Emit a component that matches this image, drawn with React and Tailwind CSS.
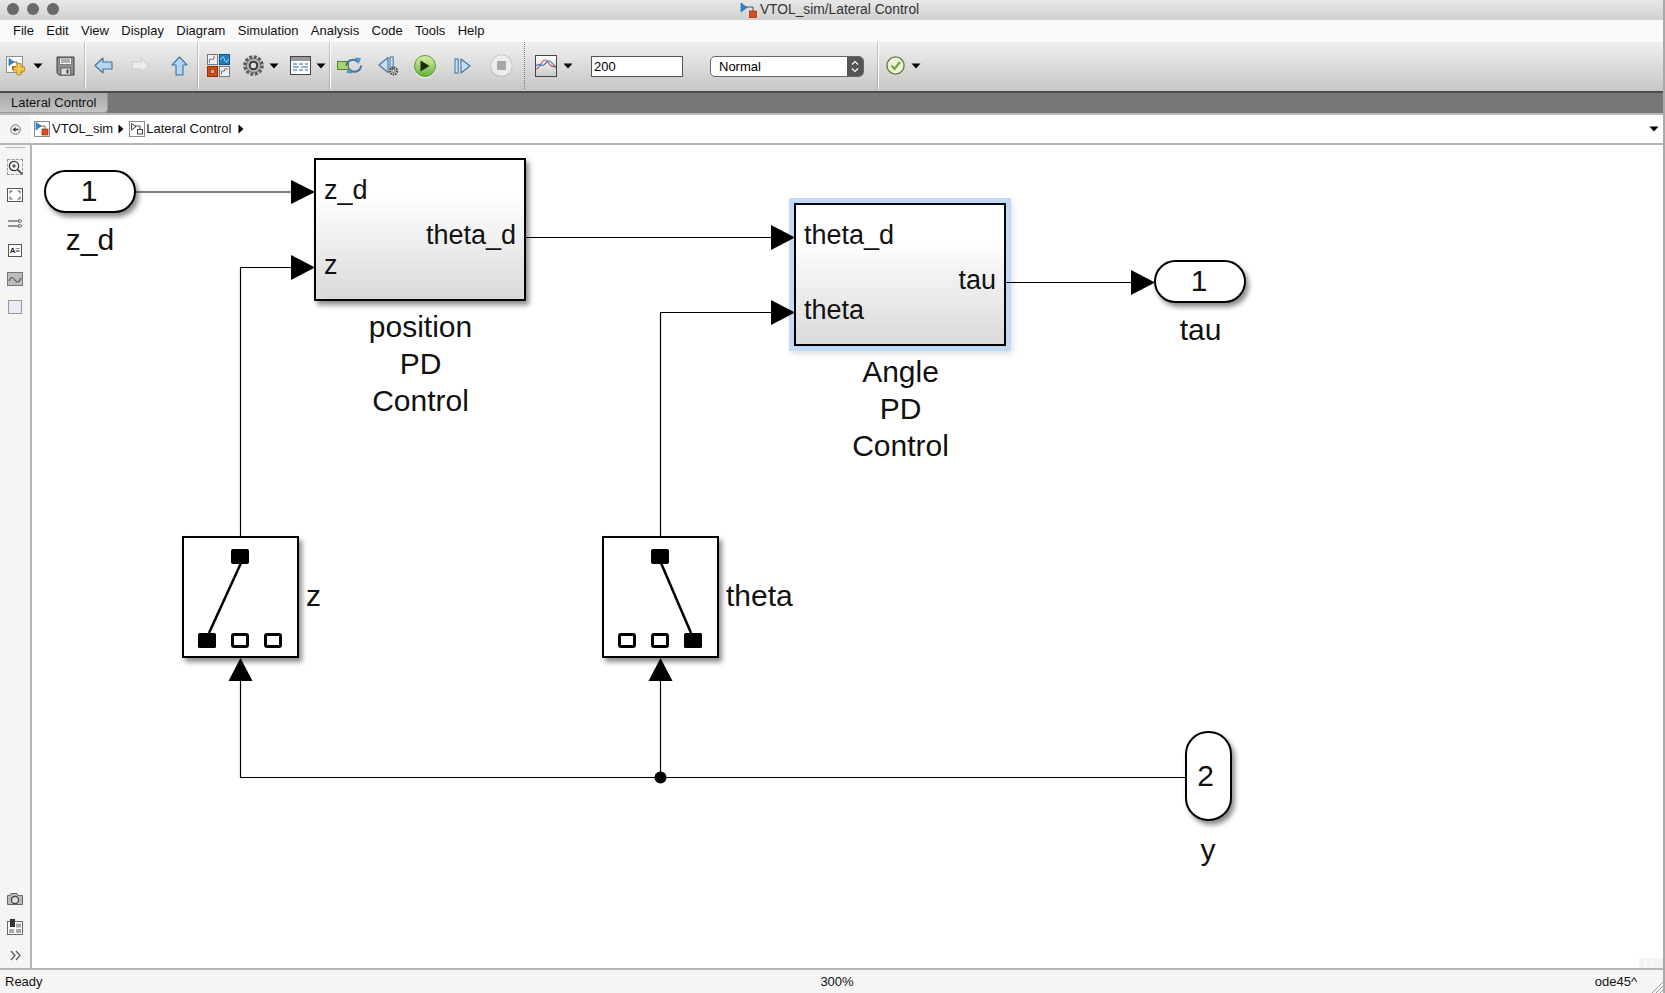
import React from "react";

const MENU = ["File", "Edit", "View", "Display", "Diagram", "Simulation", "Analysis", "Code", "Tools", "Help"];

function Caret({ className = "" }) {
  return (
    <svg width="10" height="6" viewBox="0 0 10 6" className={className}>
      <path d="M0.5 0.5H9.5L5 5.5Z" fill="#000" />
    </svg>
  );
}

function CaretRight() {
  return (
    <svg width="6" height="10" viewBox="0 0 6 10" className="shrink-0">
      <path d="M0.5 0.5V9.5L5.5 5Z" fill="#000" />
    </svg>
  );
}

function ModelIcon({ size = 16 }) {
  return (
    <svg width={size} height={size} viewBox="0 0 16 16">
      <rect x="0.5" y="0.5" width="15" height="15" fill="#fff" stroke="#8a8a8a" />
      <path d="M2 1.5V9L7 5Z" fill="#2f86c8" stroke="#1c5f95" strokeWidth="0.6" />
      <path d="M5 5H11V8" fill="none" stroke="#444" strokeWidth="0.8" />
      <rect x="8" y="8" width="6" height="6" fill="#d9501e" stroke="#8c2f0e" strokeWidth="0.7" />
    </svg>
  );
}

function SubsystemIcon() {
  return (
    <svg width="16" height="16" viewBox="0 0 16 16">
      <rect x="0.5" y="0.5" width="15" height="15" fill="#fff" stroke="#8a8a8a" />
      <path d="M2.5 2.5V9L7 5.7Z" fill="#fff" stroke="#333" strokeWidth="0.9" />
      <path d="M6 5H11V8" fill="none" stroke="#333" strokeWidth="0.9" />
      <rect x="8.5" y="8.5" width="5" height="4.5" fill="#fff" stroke="#333" strokeWidth="0.9" />
    </svg>
  );
}

function NewModelIcon() {
  return (
    <svg width="20" height="20" viewBox="0 0 20 20">
      <rect x="0.5" y="0.5" width="16" height="16" fill="#fafafa" stroke="#8f8f8f" />
      <path d="M3 2.5V9.5L8 6Z" fill="#2f86c8" stroke="#1c5f95" strokeWidth="0.6" />
      <path d="M7 6H11V9" fill="none" stroke="#444" strokeWidth="0.8" />
      <rect x="6" y="10" width="4" height="4" fill="#d9501e" />
      <path d="M11 7.5H15V11H18.5V15H15V19H11V15H7.5V11H11Z" fill="#f3cb4a" stroke="#a98418" strokeWidth="0.8" />
    </svg>
  );
}

function SaveIcon() {
  return (
    <svg width="19" height="20" viewBox="0 0 19 20">
      <path d="M1 1H18V19H3L1 17Z" fill="#8e8e8e" stroke="#3f3f3f" />
      <rect x="3.5" y="2" width="12" height="6.5" fill="#f4f4f4" stroke="#555" strokeWidth="0.6" />
      <path d="M5 4H14M5 6H14" stroke="#444" strokeWidth="0.8" />
      <rect x="5" y="12" width="9.5" height="7" fill="#dcdcdc" stroke="#444" strokeWidth="0.7" />
      <rect x="10.5" y="13.5" width="2" height="4" fill="#444" />
    </svg>
  );
}

function ArrowIcon({ dir, fill, stroke }) {
  const d = {
    left: "M1 8.5L9 1V5H18V12H9V16Z",
    right: "M18 8.5L10 1V5H1V12H10V16Z",
  }[dir];
  return (
    <svg width="19" height="17" viewBox="0 0 19 17">
      <path d={d} fill={fill} stroke={stroke} strokeWidth="1.1" strokeLinejoin="round" />
    </svg>
  );
}

function UpIcon() {
  return (
    <svg width="17" height="20" viewBox="0 0 17 20">
      <path d="M8.5 1L16 9H12V19H5V9H1Z" fill="#b5d6f2" stroke="#42719d" strokeWidth="1.1" strokeLinejoin="round" />
    </svg>
  );
}

function LibraryIcon() {
  return (
    <svg width="23" height="23" viewBox="0 0 23 23">
      <rect x="0.5" y="0.5" width="10" height="10" fill="#efefef" stroke="#777" />
      <path d="M2.5 9V5.5L7 5V1.5" fill="none" stroke="#777" />
      <rect x="12.5" y="0.5" width="10" height="10" fill="#1d7fc0" stroke="#14567f" />
      <path d="M13.5 6C15 2 16.5 2 17.5 5.5S20 9 21.5 5" fill="none" stroke="#bfe2f7" />
      <rect x="0.5" y="12.5" width="10" height="10" fill="#d04a17" stroke="#8b2f0c" />
      <rect x="3.5" y="15.5" width="4" height="4" fill="#f2a685" stroke="#7a2a0a" strokeWidth="0.6" />
      <rect x="12.5" y="12.5" width="10" height="10" fill="#efefef" stroke="#777" />
      <path d="M14.5 20.5V17H17.5V15H21" fill="none" stroke="#777" />
    </svg>
  );
}

function GearIcon() {
  return (
    <svg width="21" height="21" viewBox="0 0 21 21">
      <circle cx="10.5" cy="10.5" r="8.6" fill="none" stroke="#5c5c5c" strokeWidth="3.4" strokeDasharray="3 1.5" />
      <circle cx="10.5" cy="10.5" r="7" fill="#bdbdbd" stroke="#666" strokeWidth="1" />
      <circle cx="10.5" cy="10.5" r="3.8" fill="#ddd" stroke="#3c3c3c" strokeWidth="2" />
    </svg>
  );
}

function ConfigIcon() {
  return (
    <svg width="21" height="19" viewBox="0 0 21 19">
      <rect x="0.5" y="0.5" width="20" height="18" fill="#fff" stroke="#444" />
      <rect x="1" y="1" width="19" height="4" fill="#9a9a9a" />
      <path d="M3 8H7M9 8H13M15 8H18M3 11H9M11 11H18M3 14H7M9 14H13M15 14H18" stroke="#2469a8" strokeWidth="1.2" />
    </svg>
  );
}

function LoopIcon() {
  return (
    <svg width="25" height="17" viewBox="0 0 25 17">
      <rect x="0.5" y="4.5" width="11" height="8" fill="#a7d26b" stroke="#5d7f2c" />
      <path d="M9.5 9A6.5 6 0 0 1 21 5" fill="none" stroke="#3f78a8" strokeWidth="2" />
      <path d="M24 8.5A6.5 6 0 0 1 12.5 12.5" fill="none" stroke="#3f78a8" strokeWidth="2" />
      <path d="M18.5 1L23.5 1.5L21.5 6.5Z M15 16L10 15.5L12 10.5Z" fill="#5d9bcf" stroke="#3f78a8" strokeWidth="0.6" />
    </svg>
  );
}

function StepBackIcon() {
  return (
    <svg width="22" height="20" viewBox="0 0 22 20">
      <path d="M1 9L10 1.5V16.5Z" fill="#c7ddf2" stroke="#47739c" strokeWidth="1.1" strokeLinejoin="round" />
      <rect x="12" y="1" width="3.2" height="12" fill="#c7ddf2" stroke="#47739c" strokeWidth="1" />
      <circle cx="15.5" cy="15" r="3.6" fill="none" stroke="#4a4a4a" strokeWidth="2" strokeDasharray="1.6 0.8" />
      <circle cx="15.5" cy="15" r="1.6" fill="#e8e8e8" stroke="#4a4a4a" strokeWidth="0.8" />
    </svg>
  );
}

function StepForwardIcon() {
  return (
    <svg width="17" height="16" viewBox="0 0 17 16">
      <rect x="1" y="1" width="3.2" height="14" fill="#c7ddf2" stroke="#47739c" strokeWidth="1" />
      <path d="M7 1L16 8L7 15Z" fill="#c7ddf2" stroke="#47739c" strokeWidth="1.1" strokeLinejoin="round" />
    </svg>
  );
}

function PlayIcon() {
  return (
    <div className="flex h-[22px] w-[22px] items-center justify-center rounded-full border border-[#5f9a35] bg-linear-to-b from-[#d8efa9] to-[#63b53a] shadow-[0_1px_1px_rgba(255,255,255,0.8)]">
      <svg width="10" height="12" viewBox="0 0 10 12">
        <path d="M0.5 0.5L9.5 6L0.5 11.5Z" fill="#1d2a10" />
      </svg>
    </div>
  );
}

function StopIcon() {
  return (
    <div className="flex h-[21px] w-[21px] items-center justify-center rounded-full bg-[#ededed] shadow-[0_0_1px_rgba(0,0,0,0.5)]">
      <div className="h-[9px] w-[9px] bg-[#a8a8a8]" />
    </div>
  );
}

function ScopeIcon() {
  return (
    <svg width="22" height="22" viewBox="0 0 22 22">
      <defs>
        <linearGradient id="scopeBg" x1="0" y1="0" x2="0" y2="1">
          <stop offset="0" stopColor="#fff" />
          <stop offset="1" stopColor="#c9c9c9" />
        </linearGradient>
      </defs>
      <rect x="0.5" y="0.5" width="21" height="21" fill="url(#scopeBg)" stroke="#444" />
      <path d="M1 14C5 14 6 5 10 5S14 14 21 11" fill="none" stroke="#d44a3f" strokeWidth="1.2" />
      <path d="M1 11C4 7 7 13 10 9S14 3 21 13" fill="none" stroke="#2c78bd" strokeWidth="1.2" />
    </svg>
  );
}

function CheckIcon() {
  return (
    <svg width="19" height="19" viewBox="0 0 19 19">
      <circle cx="9.5" cy="9.5" r="8.6" fill="#eef2df" stroke="#5f7d36" strokeWidth="1.4" />
      <path d="M5.5 9.5L8.5 13L14 6" fill="none" stroke="#7aa63c" strokeWidth="2.2" />
    </svg>
  );
}

function Separator() {
  return <div className="h-full w-px shrink-0 bg-white shadow-[-1px_0_0_rgba(120,120,120,0.35)]" />;
}

function Slot({ className, children }) {
  return <div className={`flex h-full shrink-0 items-center justify-center ${className}`}>{children}</div>;
}

function Toolbar() {
  return (
    <div className="flex h-[51px] items-stretch border-b-2 border-[#4d4d4d] bg-linear-to-b from-[#f0f0f0] to-[#c6c6c6] pb-[2px]">
      <Slot className="w-[32px]"><NewModelIcon /></Slot>
      <Slot className="w-[12px]"><Caret /></Slot>
      <Slot className="ml-px w-[40px]"><SaveIcon /></Slot>
      <Separator />
      <Slot className="w-[34px]"><ArrowIcon dir="left" fill="#b5d6f2" stroke="#42719d" /></Slot>
      <Slot className="w-[40px]"><ArrowIcon dir="right" fill="#ececec" stroke="#cfcfcf" /></Slot>
      <Slot className="w-[38px]"><UpIcon /></Slot>
      <Separator />
      <Slot className="w-[38px]"><LibraryIcon /></Slot>
      <Slot className="w-[32px]"><GearIcon /></Slot>
      <Slot className="w-[10px]"><Caret /></Slot>
      <Slot className="ml-[6px] w-[30px]"><ConfigIcon /></Slot>
      <Slot className="w-[12px]"><Caret /></Slot>
      <div className="ml-[3px]"><Separator /></div>
      <Slot className="w-[36px]"><LoopIcon /></Slot>
      <Slot className="w-[44px]"><StepBackIcon /></Slot>
      <Slot className="w-[28px]"><PlayIcon /></Slot>
      <Slot className="w-[46px]"><StepForwardIcon /></Slot>
      <Slot className="w-[32px]"><StopIcon /></Slot>
      <div className="ml-[7px] w-px shrink-0 border-l border-dotted border-[#777]" />
      <Slot className="ml-[5px] w-[32px]"><ScopeIcon /></Slot>
      <Slot className="w-[12px]"><Caret /></Slot>
      <Slot className="ml-[17px] w-[92px] pt-[2px]">
        <div className="flex h-[21px] w-full items-center border border-[#555] bg-white pl-[2px] text-[13px] text-black">200</div>
      </Slot>
      <Slot className="ml-[27px] w-[154px] pt-[2px]">
        <div className="flex h-[21px] w-full items-center overflow-hidden rounded-[5px] border border-[#666] bg-white pl-[8px] text-[13px] text-black">
          <span className="flex-1">Normal</span>
          <div className="flex h-full w-[16px] items-center justify-center bg-[#555]">
            <svg width="8" height="13" viewBox="0 0 8 13">
              <path d="M1 4.5L4 1.5L7 4.5M1 8.5L4 11.5L7 8.5" fill="none" stroke="#fff" strokeWidth="1.2" />
            </svg>
          </div>
        </div>
      </Slot>
      <div className="ml-[14px]"><Separator /></div>
      <Slot className="w-[32px]"><CheckIcon /></Slot>
      <Slot className="w-[10px]"><Caret /></Slot>
    </div>
  );
}

function Sidebar() {
  return (
    <div className="flex w-[32px] shrink-0 flex-col items-center justify-between border-r-2 border-[#b5b5b5] bg-[#f5f5f5]">
      <div className="flex flex-col items-center">
        <div className="mt-[2px] h-px w-[19px] bg-[#bbb]" />
        <div className="mt-[11px] flex h-[16px] w-[16px] items-center justify-center border border-dashed border-[#999]">
          <svg width="16" height="16" viewBox="0 0 16 16" className="shrink-0">
            <circle cx="7" cy="7" r="4.6" fill="#fff" stroke="#333" strokeWidth="1.3" />
            <path d="M5 7H9M7 5V9" stroke="#333" strokeWidth="1" />
            <path d="M10.5 10.5L15 15" stroke="#555" strokeWidth="2" />
          </svg>
        </div>
        <svg width="16" height="14" viewBox="0 0 16 14" className="mt-[13px]">
          <rect x="0.5" y="0.5" width="15" height="13" fill="#fff" stroke="#555" />
          <path d="M3 5.5V3H5.5M13 5.5V3H10.5M3 8.5V11H5.5M13 8.5V11H10.5" fill="none" stroke="#555" />
        </svg>
        <svg width="15" height="10" viewBox="0 0 15 10" className="mt-[16px]">
          <path d="M0 3H11M0 8H11" stroke="#333" />
          <path d="M11 1L14 3L11 5ZM11 6L14 8L11 10Z" fill="#fff" stroke="#555" strokeWidth="0.8" />
        </svg>
        <div className="mt-[16px] flex h-[13px] w-[14px] items-center justify-center border border-[#555] bg-white text-[8px] font-bold leading-none text-[#222]">
          A≡
        </div>
        <svg width="16" height="14" viewBox="0 0 16 14" className="mt-[15px]">
          <rect x="0.5" y="0.5" width="15" height="13" fill="#bdbdbd" stroke="#777" />
          <path d="M2 9C4 4 6 5 8 8S12 11 14 6" fill="none" stroke="#555" strokeWidth="1.2" />
        </svg>
        <div className="mt-[14px] h-[14px] w-[14px] border border-[#999] bg-[#eaeaf8]" />
      </div>
      <div className="mb-[7px] flex flex-col items-center">
        <svg width="16" height="12" viewBox="0 0 16 12">
          <path d="M0.5 2.5H3L4 0.5H10L11 2.5H15.5V11.5H0.5Z" fill="#bbb" stroke="#666" />
          <circle cx="8" cy="7" r="3.6" fill="#ddd" stroke="#444" strokeWidth="1.2" />
        </svg>
        <svg width="16" height="16" viewBox="0 0 16 16" className="mt-[14px]">
          <rect x="0.5" y="2.5" width="15" height="13" fill="#fff" stroke="#666" />
          <rect x="3" y="0" width="5" height="8" fill="#333" />
          <rect x="9" y="4.5" width="5" height="4" fill="#aaa" />
          <rect x="2" y="10" width="5" height="4" fill="#aaa" />
          <rect x="9" y="10" width="5" height="4" fill="#aaa" />
        </svg>
        <svg width="11" height="11" viewBox="0 0 11 11" className="mt-[15px]">
          <path d="M1 1L5 5.5L1 10M6 1L10 5.5L6 10" fill="none" stroke="#555" strokeWidth="1.2" />
        </svg>
      </div>
    </div>
  );
}

function Block({ className, inputs, output }) {
  return (
    <div className={`absolute h-[143px] w-[212px] border-2 border-black bg-linear-to-b from-white from-25% to-[#dadada] to-100% ${className}`}>
      {inputs.map((input) => (
        <div key={input.label} className={`absolute left-[8px] text-[27px] leading-[30px] ${input.top}`}>
          {input.label}
        </div>
      ))}
      <div className={`absolute right-[8px] text-[27px] leading-[30px] ${output.top}`}>{output.label}</div>
    </div>
  );
}

function Switch({ className, line }) {
  const filled = line === "left" ? 0 : 2;
  const endX = line === "left" ? 25 : 87;
  return (
    <div className={`absolute top-[391px] h-[122px] w-[117px] border-2 border-black bg-white shadow-[3px_4px_5px_rgba(0,0,0,0.45)] ${className}`}>
      <svg width="113" height="118" viewBox="0 0 113 118" className="absolute left-0 top-0">
        <rect x="47" y="11" width="18" height="15" rx="2" fill="#000" />
        {[14, 47, 80].map((x, i) => (
          <rect
            key={x}
            x={i === filled ? x : x + 1.5}
            y={i === filled ? 95 : 96.5}
            width={i === filled ? 18 : 15}
            height={i === filled ? 15 : 12}
            rx="1.5"
            fill={i === filled ? "#000" : "#fff"}
            stroke="#000"
            strokeWidth={i === filled ? 0 : 3}
          />
        ))}
        <path d={`M57 25L${endX} 95`} stroke="#000" strokeWidth="2.5" />
      </svg>
    </div>
  );
}

function Wires() {
  return (
    <svg width="1633" height="823" viewBox="0 0 1633 823" className="pointer-events-none absolute left-0 top-0">
      <g fill="none" stroke="#000" strokeWidth="1.2">
        <path d="M103 47H260" />
        <path d="M494 92.5H740" />
        <path d="M208.5 391V122.5H260" />
        <path d="M628.5 391V167.5H740" />
        <path d="M974 137.5H1100" />
        <path d="M1153 632.5H208.5V536" />
        <path d="M628.5 632.5V536" />
      </g>
      <g fill="#000">
        <path d="M259 35L283 47L259 59Z" />
        <path d="M259 110L283 122.5L259 135Z" />
        <path d="M739 80L763 92.5L739 105Z" />
        <path d="M739 155L763 167.5L739 180Z" />
        <path d="M1099 125L1123 137.5L1099 150Z" />
        <path d="M208.5 513L220.5 536H196.5Z" />
        <path d="M628.5 513L640.5 536H616.5Z" />
        <circle cx="628.5" cy="632.5" r="6" />
      </g>
    </svg>
  );
}

function Diagram() {
  return (
    <div className="relative flex-1 bg-white text-[30px] text-[#111]">
      <div className="absolute left-[12px] top-[25px] flex h-[43px] w-[92px] items-center justify-center rounded-[22px] border-2 border-black bg-white pb-[2px] pr-[2px] shadow-[3px_4px_5px_rgba(0,0,0,0.45)]">1</div>
      <div className="absolute left-[13px] top-[76px] w-[90px] text-center leading-[37px]">z_d</div>

      <Block
        className="left-[282px] top-[13px] shadow-[3px_4px_5px_rgba(0,0,0,0.45)]"
        inputs={[
          { label: "z_d", top: "top-[15px]" },
          { label: "z", top: "top-[90px]" },
        ]}
        output={{ label: "theta_d", top: "top-[60px]" }}
      />
      <div className="absolute left-[283px] top-[163px] w-[211px] text-center leading-[37px]">
        position
        <br />
        PD
        <br />
        Control
      </div>

      <Block
        className="left-[762px] top-[58px] shadow-[0_0_0_5px_#c2daf8,2px_3px_6px_5px_rgba(0,0,0,0.12)]"
        inputs={[
          { label: "theta_d", top: "top-[15px]" },
          { label: "theta", top: "top-[90px]" },
        ]}
        output={{ label: "tau", top: "top-[60px]" }}
      />
      <div className="absolute left-[763px] top-[208px] w-[211px] text-center leading-[37px]">
        Angle
        <br />
        PD
        <br />
        Control
      </div>

      <div className="absolute left-[1122px] top-[115px] flex h-[43px] w-[92px] items-center justify-center rounded-[22px] border-2 border-black bg-white pb-[2px] pr-[2px] shadow-[3px_4px_5px_rgba(0,0,0,0.45)]">1</div>
      <div className="absolute left-[1123px] top-[166px] w-[91px] text-center leading-[37px]">tau</div>

      <Switch className="left-[150px]" line="left" />
      <div className="absolute left-[274px] top-[432px] leading-[37px]">z</div>
      <Switch className="left-[570px]" line="right" />
      <div className="absolute left-[694px] top-[432px] leading-[37px]">theta</div>

      <div className="absolute left-[1153px] top-[586px] flex h-[90px] w-[47px] items-center justify-center rounded-[23px] border-2 border-black bg-white pb-[2px] pr-[6px] shadow-[3px_4px_5px_rgba(0,0,0,0.45)]">2</div>
      <div className="absolute left-[1153px] top-[686px] w-[46px] text-center leading-[37px]">y</div>

      <div className="absolute bottom-0 right-0 flex gap-px">
        <div className="h-[10px] w-[6px] bg-[#f4f4f4]" />
        <div className="h-[10px] w-[6px] bg-[#f4f4f4]" />
        <div className="h-[10px] w-[10px] bg-[#f4f4f4]" />
      </div>

      <Wires />
    </div>
  );
}

export default function App() {
  return (
    <div className="flex h-[993px] w-[1665px] flex-col overflow-hidden border-r-2 border-[#a9a9a9] bg-[#f5f5f5] font-['Liberation_Sans',Arial,sans-serif] text-black">
      <div className="relative flex h-[20px] items-center justify-center bg-linear-to-b from-[#e8e8e8] to-[#d0d0d0] text-[13.8px] text-[#333]">
        <div className="absolute left-[7px] top-[3px] flex gap-[8px]">
          <div className="h-[12px] w-[12px] rounded-full bg-[#6a6a6a]" />
          <div className="h-[12px] w-[12px] rounded-full bg-[#6a6a6a]" />
          <div className="h-[12px] w-[12px] rounded-full bg-[#6a6a6a]" />
        </div>
        <div className="mr-[4px] flex items-center gap-[3px]">
          <svg width="17" height="16" viewBox="0 0 17 16">
            <path d="M1 1V10L7 5.5Z" fill="#2f86c8" stroke="#1c5f95" strokeWidth="0.6" />
            <path d="M6 5H13V9" fill="none" stroke="#444" strokeWidth="0.9" />
            <rect x="9.5" y="9" width="7" height="7" fill="#d9501e" stroke="#8c2f0e" strokeWidth="0.7" />
          </svg>
          <span>VTOL_sim/Lateral Control</span>
        </div>
      </div>

      <div className="flex h-[22px] items-center gap-[12.35px] bg-[#fafafa] pl-[13px] text-[13px] text-[#111]">
        {MENU.map((item) => (
          <span key={item}>{item}</span>
        ))}
      </div>

      <Toolbar />

      <div className="flex h-[22px] items-stretch border-b-2 border-[#b9b9b9] bg-[#777]">
        <div className="flex h-[20px] w-[108px] items-center rounded-br-[4px] border-r border-b border-[#9a9a9a] bg-linear-to-b from-[#a9a9a9] to-[#c4c4c4] pl-[11px] text-[13px] text-[#111]">
          Lateral Control
        </div>
      </div>

      <div className="flex h-[30px] border-b-2 border-[#b5b5b5] bg-white">
        <div className="flex w-[31px] shrink-0 items-center justify-center bg-[#f5f5f5]">
          <svg width="11" height="11" viewBox="0 0 11 11">
            <circle cx="5.5" cy="5.5" r="4.8" fill="#eee" stroke="#777" />
            <path d="M2.5 5.5L5.5 3V8Z M5 4.7H8.5V6.3H5Z" fill="#333" />
          </svg>
        </div>
        <div className="flex flex-1 items-center pl-[3px] text-[13px] text-[#111]">
          <ModelIcon />
          <span className="ml-[2px]">VTOL_sim</span>
          <span className="ml-[5px]"><CaretRight /></span>
          <span className="ml-[5px]"><SubsystemIcon /></span>
          <span className="ml-[1px]">Lateral Control</span>
          <span className="ml-[7px]"><CaretRight /></span>
          <Caret className="ml-auto mr-[4px]" />
        </div>
      </div>

      <div className="flex flex-1">
        <Sidebar />
        <Diagram />
      </div>

      <div className="relative grid h-[25px] grid-cols-3 items-center border-t-2 border-[#b5b5b5] pl-[5px] pr-[26px] text-[13px] text-[#111]">
        <span>Ready</span>
        <span className="pl-[32px] text-center">300%</span>
        <span className="text-right">ode45^</span>
        <svg width="12" height="12" viewBox="0 0 12 12" className="absolute bottom-0 right-0">
          <path d="M1 12L12 1M5 12L12 5M9 12L12 9" stroke="#999" />
        </svg>
      </div>
    </div>
  );
}
